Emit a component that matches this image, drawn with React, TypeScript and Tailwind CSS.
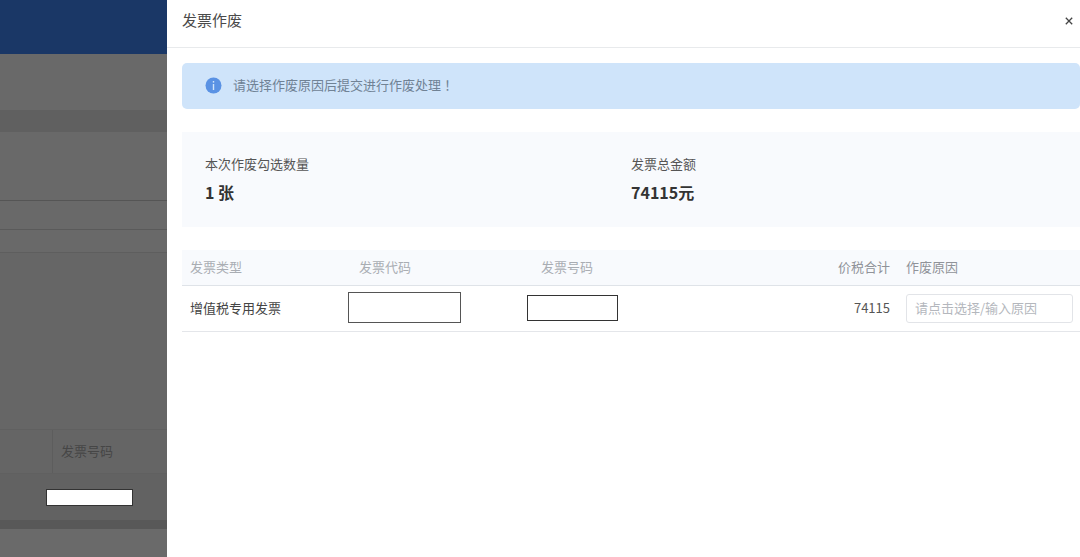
import React from 'react';

const cjk = { fontFamily: '"Noto Sans CJK SC", sans-serif' };

function Backdrop() {
  return (
    <div className="w-[167px] shrink-0 h-full flex flex-col bg-[#696969] overflow-hidden">
      <div className="h-[54px] shrink-0 bg-[#1a3766]" />
      <div className="h-[56px] shrink-0" />
      <div className="h-[22px] shrink-0 bg-[#606060]" />
      <div className="h-[69px] shrink-0 border-b border-[#555555]" />
      <div className="h-[29px] shrink-0 border-b border-[#5a5a5a]" />
      <div className="h-[23px] shrink-0 border-b border-[#5e5e5e]" />
      <div className="h-[176px] shrink-0 bg-[#666666]" />
      <div className="h-[45px] shrink-0 flex bg-[#656565] border-y border-[#606060]">
        <div className="w-[53px] border-r border-[#5d5d5d]" />
        <div className="pl-2 pb-[2px] flex items-center text-[13px] text-[#464646]">发票号码</div>
      </div>
      <div className="h-[46px] shrink-0 pl-[46px] pt-[15px] bg-[#626262]">
        <div className="w-[87px] h-[17px] bg-white border border-[#333333]" />
      </div>
      <div className="h-[9px] shrink-0 bg-[#585858]" />
      <div className="flex-1 bg-[#6a6a6a]" />
    </div>
  );
}

function Alert() {
  return (
    <div className="h-[46px] ml-[15px] flex items-center rounded-[5px] bg-[#cfe4fa] pl-[23px] pb-[2px] gap-[11px]">
      <svg width="17" height="17" viewBox="0 0 17 17">
        <circle cx="8.5" cy="8.5" r="8" fill="#5a92e4" />
        <rect x="7.8" y="4" width="1.4" height="1.6" fill="#cfe4fa" />
        <rect x="7.8" y="7" width="1.4" height="6" fill="#cfe4fa" />
      </svg>
      <span className="text-[13px] text-[#708295]">
        请选择作废原因后提交进行作废处理
        <span className="font-['Noto_Sans_CJK_TC']">！</span>
      </span>
    </div>
  );
}

function Stats() {
  return (
    <div className="h-[95px] mt-[23px] ml-[15px] bg-[#f8fafd] grid grid-cols-[426px_1fr] pl-[23px] pt-[22px]">
      <div>
        <div className="text-[13px] leading-[19px] text-[#555555]">本次作废勾选数量</div>
        <div className="mt-[8px] text-[16px] leading-[22px] font-bold text-[#333333]">1 张</div>
      </div>
      <div>
        <div className="text-[13px] leading-[19px] text-[#555555]">发票总金额</div>
        <div className="mt-[8px] text-[16px] leading-[22px] font-bold text-[#333333]">74115元</div>
      </div>
    </div>
  );
}

function InvoiceTable() {
  return (
    <div className="mt-[23px] ml-[15px] text-[13px]">
      <div className="h-[36px] pb-[2px] grid grid-cols-[166px_179px_91px_280px_1fr] items-center bg-[#f8fafd] border-b border-[#dfe3e8] text-[#a9adb3]">
        <div className="pl-2">发票类型</div>
        <div className="pl-[11px]">发票代码</div>
        <div className="pl-[14px] whitespace-nowrap">发票号码</div>
        <div className="pr-2 text-right text-[#909399]">价税合计</div>
        <div className="pl-2 text-[#909399]">作废原因</div>
      </div>
      <div className="h-[46px] pb-[2px] grid grid-cols-[166px_179px_91px_280px_1fr] items-center border-b border-[#e4e6ea] text-[#444444]">
        <div className="pl-2">增值税专用发票</div>
        <div>
          <div className="w-[113px] h-[31px] bg-white border border-[#555555]" />
        </div>
        <div>
          <div className="w-[91px] h-[26px] mt-[1px] bg-white border border-[#333333]" />
        </div>
        <div className="pr-2 text-right text-[#555555]">74115</div>
        <div className="pl-2">
          <div className="w-[167px] h-[29px] mt-[2px] flex items-center px-2 pb-[1px] rounded-[3px] border border-[#e2e4e8] text-[#b4b7bd]">
            请点击选择/输入原因
          </div>
        </div>
      </div>
    </div>
  );
}

export default function App() {
  return (
    <div className="w-[1080px] h-[557px] flex overflow-hidden bg-white" style={cjk}>
      <Backdrop />
      <div className="flex-1 min-w-0 flex flex-col">
        <div className="h-[48px] shrink-0 flex items-center justify-between pl-[15px] pr-[7px] pb-[6px] border-b border-[#e8eaec]">
          <span className="text-[15px] text-[#4a4a4a]">发票作废</span>
          <svg width="8" height="8" viewBox="0 0 8 8" className="mt-[1px]">
            <path d="M0.8 0.8 L7.2 7.2 M7.2 0.8 L0.8 7.2" stroke="#444444" strokeWidth="1.3" />
          </svg>
        </div>
        <div className="pt-[15px]">
          <Alert />
          <Stats />
          <InvoiceTable />
        </div>
      </div>
    </div>
  );
}
